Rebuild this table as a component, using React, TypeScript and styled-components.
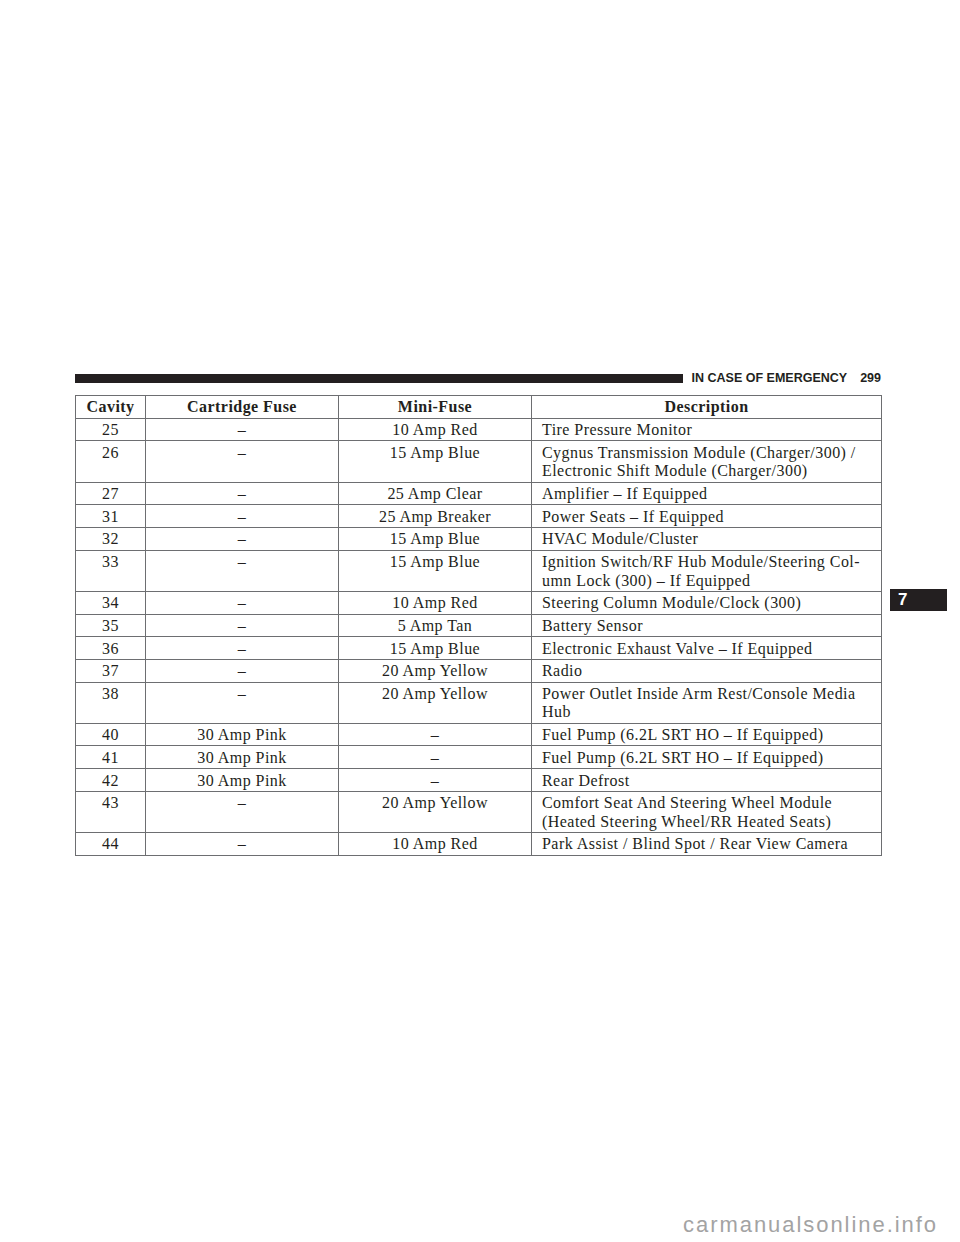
import React from "react";
import styled, { createGlobalStyle } from "styled-components";

const Global = createGlobalStyle`
  html, body { margin: 0; padding: 0; background: #ffffff; }
  #root { width: 960px; }
`;

const Page = styled.div`
  width: 960px;
  height: 1242px;
  box-sizing: border-box;
  padding: 374px 0 3px 75px;
  display: flex;
  flex-direction: column;
  background: #ffffff;
  color: #231f20;
`;

const RunningHead = styled.header`
  width: 806px;
  display: flex;
  align-items: center;
  height: 9px;
`;

const HeadBar = styled.div`
  flex: 1;
  height: 9px;
  background: #231f20;
  margin-right: 9px;
`;

const HeadText = styled.span`
  font-family: "Liberation Sans", Arial, sans-serif;
  font-weight: 700;
  font-size: 12.5px;
  line-height: 9px;
  color: #231f20;
  white-space: nowrap;
`;

const PageNum = styled.span`
  margin-left: 13px;
`;

const Body = styled.div`
  display: flex;
  align-items: flex-start;
  margin-top: 12px;
`;

const Table = styled.table`
  width: 806px;
  border-collapse: collapse;
  table-layout: fixed;
  font-family: "Liberation Serif", "Times New Roman", serif;
  font-size: 16px;
  letter-spacing: 0.45px;
  line-height: 18.5px;
  color: #231f20;
`;

const Col = styled.col<{ $w: number }>`
  width: ${(p) => p.$w}px;
`;

const Th = styled.th`
  box-sizing: border-box;
  border: 1px solid #6d6e71;
  padding: 2.4px 2px 0.8px;
  font-weight: 700;
  text-align: center;
  white-space: nowrap;
`;

const Td = styled.td<{ $left?: boolean }>`
  box-sizing: border-box;
  border: 1px solid #6d6e71;
  padding: ${(p) => (p.$left ? "2.4px 2px 0.8px 10px" : "2.4px 2px 0.8px")};
  text-align: ${(p) => (p.$left ? "left" : "center")};
  vertical-align: top;
`;

const Line = styled.span`
  display: block;
  white-space: nowrap;
`;

const SideTab = styled.div`
  margin-top: 194px;
  margin-left: 8px;
  width: 57px;
  height: 22px;
  background: #231f20;
  color: #ffffff;
  font-family: "Liberation Sans", Arial, sans-serif;
  font-weight: 700;
  font-size: 17px;
  line-height: 22px;
  padding-left: 8px;
  box-sizing: border-box;
`;

const Watermark = styled.footer`
  margin-top: auto;
  align-self: flex-end;
  margin-right: 22px;
  font-family: "Liberation Sans", Arial, sans-serif;
  font-size: 22px;
  letter-spacing: 1.95px;
  line-height: 28px;
  color: #a3a3a3;
`;

type Row = { cavity: string; cart: string; mini: string; desc: string[] };

const rows: Row[] = [
  { cavity: "25", cart: "–", mini: "10 Amp Red", desc: ["Tire Pressure Monitor"] },
  {
    cavity: "26",
    cart: "–",
    mini: "15 Amp Blue",
    desc: ["Cygnus Transmission Module (Charger/300) /", "Electronic Shift Module (Charger/300)"],
  },
  { cavity: "27", cart: "–", mini: "25 Amp Clear", desc: ["Amplifier – If Equipped"] },
  { cavity: "31", cart: "–", mini: "25 Amp Breaker", desc: ["Power Seats – If Equipped"] },
  { cavity: "32", cart: "–", mini: "15 Amp Blue", desc: ["HVAC Module/Cluster"] },
  {
    cavity: "33",
    cart: "–",
    mini: "15 Amp Blue",
    desc: ["Ignition Switch/RF Hub Module/Steering Col-", "umn Lock (300) – If Equipped"],
  },
  { cavity: "34", cart: "–", mini: "10 Amp Red", desc: ["Steering Column Module/Clock (300)"] },
  { cavity: "35", cart: "–", mini: "5 Amp Tan", desc: ["Battery Sensor"] },
  { cavity: "36", cart: "–", mini: "15 Amp Blue", desc: ["Electronic Exhaust Valve – If Equipped"] },
  { cavity: "37", cart: "–", mini: "20 Amp Yellow", desc: ["Radio"] },
  {
    cavity: "38",
    cart: "–",
    mini: "20 Amp Yellow",
    desc: ["Power Outlet Inside Arm Rest/Console Media", "Hub"],
  },
  { cavity: "40", cart: "30 Amp Pink", mini: "–", desc: ["Fuel Pump (6.2L SRT HO – If Equipped)"] },
  { cavity: "41", cart: "30 Amp Pink", mini: "–", desc: ["Fuel Pump (6.2L SRT HO – If Equipped)"] },
  { cavity: "42", cart: "30 Amp Pink", mini: "–", desc: ["Rear Defrost"] },
  {
    cavity: "43",
    cart: "–",
    mini: "20 Amp Yellow",
    desc: ["Comfort Seat And Steering Wheel Module", "(Heated Steering Wheel/RR Heated Seats)"],
  },
  {
    cavity: "44",
    cart: "–",
    mini: "10 Amp Red",
    desc: ["Park Assist / Blind Spot / Rear View Camera"],
  },
];

export default function App() {
  return (
    <>
      <Global />
      <Page>
        <RunningHead>
          <HeadBar />
          <HeadText>
            IN CASE OF EMERGENCY<PageNum>299</PageNum>
          </HeadText>
        </RunningHead>
        <Body>
          <Table>
            <colgroup>
              <Col $w={70} />
              <Col $w={193} />
              <Col $w={193} />
              <Col $w={350} />
            </colgroup>
            <thead>
              <tr>
                <Th>Cavity</Th>
                <Th>Cartridge Fuse</Th>
                <Th>Mini-Fuse</Th>
                <Th>Description</Th>
              </tr>
            </thead>
            <tbody>
              {rows.map((r) => (
                <tr key={r.cavity}>
                  <Td>{r.cavity}</Td>
                  <Td>{r.cart}</Td>
                  <Td>{r.mini}</Td>
                  <Td $left>
                    {r.desc.map((l, i) => (
                      <Line key={i}>{l}</Line>
                    ))}
                  </Td>
                </tr>
              ))}
            </tbody>
          </Table>
          <SideTab>7</SideTab>
        </Body>
        <Watermark>carmanualsonline.info</Watermark>
      </Page>
    </>
  );
}
